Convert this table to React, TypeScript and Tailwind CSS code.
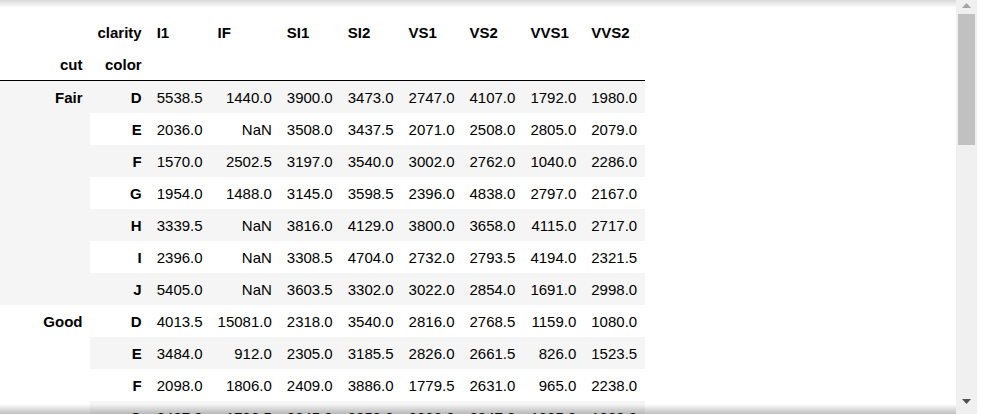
import React from "react";

const columns = ["I1", "IF", "SI1", "SI2", "VS1", "VS2", "VVS1", "VVS2"];

type Group = { cut: string; rows: [string, string[]][] };

const groups: Group[] = [
  {
    cut: "Fair",
    rows: [
      ["D", ["5538.5", "1440.0", "3900.0", "3473.0", "2747.0", "4107.0", "1792.0", "1980.0"]],
      ["E", ["2036.0", "NaN", "3508.0", "3437.5", "2071.0", "2508.0", "2805.0", "2079.0"]],
      ["F", ["1570.0", "2502.5", "3197.0", "3540.0", "3002.0", "2762.0", "1040.0", "2286.0"]],
      ["G", ["1954.0", "1488.0", "3145.0", "3598.5", "2396.0", "4838.0", "2797.0", "2167.0"]],
      ["H", ["3339.5", "NaN", "3816.0", "4129.0", "3800.0", "3658.0", "4115.0", "2717.0"]],
      ["I", ["2396.0", "NaN", "3308.5", "4704.0", "2732.0", "2793.5", "4194.0", "2321.5"]],
      ["J", ["5405.0", "NaN", "3603.5", "3302.0", "3022.0", "2854.0", "1691.0", "2998.0"]],
    ],
  },
  {
    cut: "Good",
    rows: [
      ["D", ["4013.5", "15081.0", "2318.0", "3540.0", "2816.0", "2768.5", "1159.0", "1080.0"]],
      ["E", ["3484.0", "912.0", "2305.0", "3185.5", "2826.0", "2661.5", "826.0", "1523.5"]],
      ["F", ["2098.0", "1806.0", "2409.0", "3886.0", "1779.5", "2631.0", "965.0", "2238.0"]],
      ["G", ["2437.0", "1790.5", "2845.0", "3059.0", "2888.0", "2347.0", "1835.0", "1933.0"]],
    ],
  },
];

const cell = "px-[7.5px] py-[7.5px]";

const Scrollbar: React.FC = () => (
  <div className="w-[21px] h-full bg-[#f0f0f0] flex flex-col items-center">
    <div className="h-[14px] w-full flex justify-center pt-[3px]">
      <svg width="9" height="5" viewBox="0 0 9 5">
        <polygon points="4.5,0 9,5 0,5" fill="#a3a3a3" />
      </svg>
    </div>
    <div className="w-[17px] h-[131px] bg-[#c1c1c1]" />
    <div className="flex-1" />
    <div className="h-[17px] w-full flex justify-center pt-[2px]">
      <svg width="9" height="5" viewBox="0 0 9 5">
        <polygon points="0,0 9,0 4.5,5" fill="#505050" />
      </svg>
    </div>
  </div>
);

const App: React.FC = () => {
  let rowIndex = 0;

  return (
    <div className="w-[982px] h-[414px] bg-white flex overflow-hidden font-['Liberation_Sans',Arial,sans-serif]">
      <div className="relative w-[956px] h-full overflow-hidden">
        <div className="pt-4">
          <table className="border-collapse text-[15px] leading-[17px] text-black">
            <thead className="align-bottom">
              <tr>
                <th className={`${cell} w-[90px] text-left font-bold`}></th>
                <th className={`${cell} text-left font-bold`}>clarity</th>
                {columns.map((c) => (
                  <th key={c} className={`${cell} text-left font-bold`}>
                    {c}
                  </th>
                ))}
              </tr>
              <tr>
                <th className={`${cell} text-right font-bold border-b border-black`}>cut</th>
                <th className={`${cell} text-right font-bold border-b border-black`}>color</th>
                {columns.map((c) => (
                  <th key={c} className={`${cell} border-b border-black`}></th>
                ))}
              </tr>
            </thead>
            <tbody>
              {groups.map((g) =>
                g.rows.map(([color, values], j) => {
                  const striped = rowIndex++ % 2 === 0;
                  return (
                    <tr key={g.cut + color} className={striped ? "bg-[#f5f5f5]" : "bg-white"}>
                      {j === 0 && (
                        <th rowSpan={g.rows.length} className={`${cell} text-right font-bold align-top`}>
                          {g.cut}
                        </th>
                      )}
                      <th className={`${cell} text-right font-bold align-middle`}>{color}</th>
                      {values.map((v, k) => (
                        <td key={k} className={`${cell} text-right`}>
                          {v}
                        </td>
                      ))}
                    </tr>
                  );
                })
              )}
            </tbody>
          </table>
        </div>
        {/* inset shadow of the scrolled output box */}
        <div className="absolute top-0 left-0 right-0 h-[8px] bg-linear-to-b from-black/15 to-transparent" />
        <div className="absolute bottom-0 left-0 right-0 h-[10px] bg-linear-to-t from-black/25 to-transparent" />
      </div>
      <Scrollbar />
      <div className="w-[5px] h-full bg-white" />
    </div>
  );
};

export default App;
